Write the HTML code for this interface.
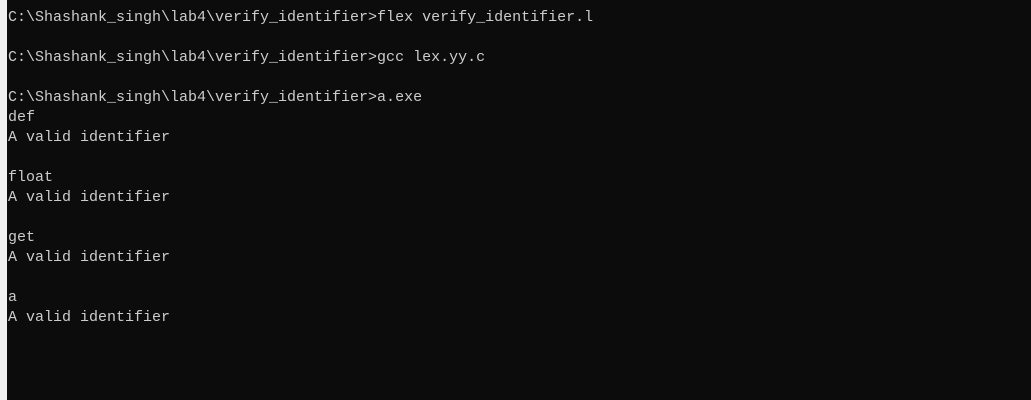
<!DOCTYPE html>
<html><head><style>
html,body{margin:0;padding:0;width:1031px;height:400px;overflow:hidden;background:#0c0c0c;}
.strip{position:absolute;left:0;top:0;width:7px;height:400px;background:#f0f0f0;}
pre{position:absolute;left:8px;top:8px;margin:0;font-family:"Liberation Mono",monospace;font-size:15px;line-height:20px;color:#cccccc;}
</style></head><body>
<div class="strip"></div>
<pre>C:\Shashank_singh\lab4\verify_identifier>flex verify_identifier.l

C:\Shashank_singh\lab4\verify_identifier>gcc lex.yy.c

C:\Shashank_singh\lab4\verify_identifier>a.exe
def
A valid identifier

float
A valid identifier

get
A valid identifier

a
A valid identifier</pre>
</body></html>
